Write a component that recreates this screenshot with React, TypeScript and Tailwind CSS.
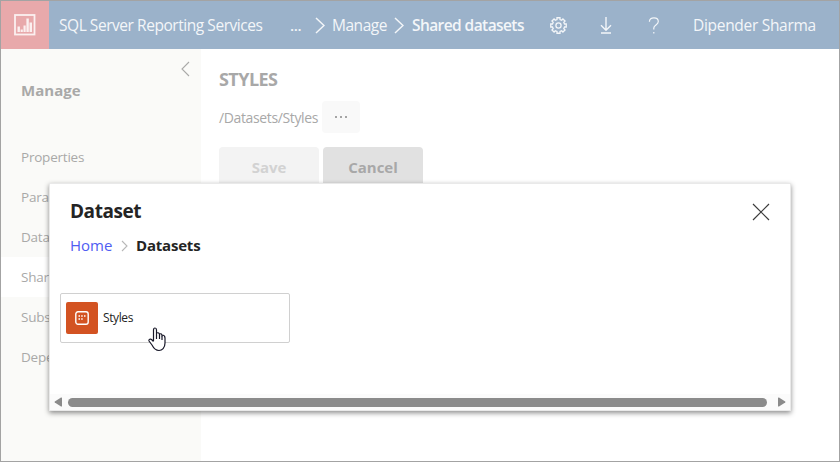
import React from 'react';

type TextProps = { children: React.ReactNode; className?: string };

const T = ({ children, className = '' }: TextProps) => (
  <span className={`block whitespace-nowrap ${className}`}>{children}</span>
);

const Chevron = ({ className = '', d = 'M1 1 L9 8.5 L1 16', w = 10, h = 17, sw = 1.5 }) => (
  <svg width={w} height={h} viewBox={`0 0 ${w} ${h}`} className={`shrink-0 ${className}`} fill="none" stroke="currentColor" strokeWidth={sw}>
    <path d={d} />
  </svg>
);

const gearPath = Array.from({ length: 8 }, (_, i) => {
  const pt = (r: number, deg: number) => {
    const a = (deg * Math.PI) / 180;
    return `${(8.5 + r * Math.cos(a)).toFixed(2)} ${(8.5 + r * Math.sin(a)).toFixed(2)}`;
  };
  const c = i * 45;
  return `${i ? 'L' : 'M'}${pt(6.2, c - 14)} L${pt(7.9, c - 11)} L${pt(7.9, c + 11)} L${pt(6.2, c + 14)}`;
}).join(' ') + 'Z';

function Header() {
  return (
    <header className="flex h-12 shrink-0 items-center bg-[#9bb2ca] text-[#f3f6f9]">
      <div className="flex h-12 w-12 shrink-0 items-center justify-center bg-[#e8a9ab]">
        <svg width="22" height="22" viewBox="0 0 22 22" className="text-[#fbf0f0]">
          <rect x="1" y="1" width="19.5" height="19.5" fill="none" stroke="currentColor" strokeWidth="1.8" />
          <path fill="currentColor" d="M3.5 12.5h2.4V18H3.5zM6.6 15.5h2.2V18H6.6zM9.5 11.5h2.2V18H9.5zM12.4 4.5h2.4V18h-2.4zM15.5 8.5h2.5V18h-2.5z" />
        </svg>
      </div>
      <T className="ml-[10px] w-[231px] pt-0.5 text-[15.5px] tracking-[-0.45px]">SQL Server Reporting Services</T>
      <T className="w-[25px] text-[15px] font-semibold tracking-[-0.4px]">...</T>
      <Chevron />
      <T className="ml-[7px] w-[62px] pt-0.5 text-[15.5px] tracking-[-0.47px]">Manage</T>
      <Chevron />
      <T className="ml-2 w-[138px] pt-0.5 text-[15.5px] font-semibold tracking-[-0.58px]">Shared datasets</T>
      <svg width="17" height="17" viewBox="0 0 17 17" fill="none" stroke="currentColor" strokeWidth="1.3" className="shrink-0">
        <path d={gearPath} />
        <circle cx="8.5" cy="8.5" r="2.6" />
      </svg>
      <svg width="12" height="17" viewBox="0 0 12 17" fill="none" stroke="currentColor" strokeWidth="1.4" className="ml-[33px] shrink-0">
        <path d="M6 0V13M1 8.2L6 13.2L11 8.2M1 16H11" />
      </svg>
      <svg width="12" height="17" viewBox="0 0 12 17" fill="none" stroke="currentColor" strokeWidth="1.2" className="ml-9 shrink-0">
        <path d="M1.4 4.8C1.4 2.2 3.4.8 5.9.8C8.5.8 10.3 2.3 10.3 4.5C10.3 7.8 5.8 8 5.8 11V12.5M5.8 15V16.5" />
      </svg>
      <T className="ml-[33px] pt-0.5 text-[15.5px] tracking-[-0.3px]">Dipender Sharma</T>
    </header>
  );
}

function Sidebar() {
  return (
    <aside className="w-[200px] shrink-0 bg-[#fafaf8] text-[#a9a9a8]">
      <div className="flex h-[88px] justify-between pl-5 pr-[11px]">
        <T className="pt-[31px] text-[15px] leading-5 font-bold tracking-[0.05px]">Manage</T>
        <Chevron className="mt-3" w={9} h={16} sw={1.1} d="M8 1 L1 8 L8 15" />
      </div>
      {['Properties', 'Para', 'Data', 'Shar', 'Subs', 'Depe'].map((n, i) => (
        <div key={n} className={`flex h-10 items-center pl-5 ${i === 3 ? 'bg-white' : ''}`}>
          <T className="text-[13.5px] tracking-[-0.22px]">{n}</T>
        </div>
      ))}
    </aside>
  );
}

function Dialog() {
  return (
    <section className="absolute top-[182px] left-[48px] flex h-[228px] w-[742px] flex-col border border-[#e9e9e9] bg-white text-[#242424] shadow-[0_2px_5px_rgba(0,0,0,0.45)]">
      <div className="flex h-[50px] justify-between pl-5 pr-5">
        <T className="pt-[15px] text-[19px] leading-6 font-bold tracking-[-0.45px]">Dataset</T>
        <svg width="18" height="18" viewBox="0 0 18 18" className="mt-[19px]" stroke="#3c3c3c" strokeWidth="1.2">
          <path d="M1 1L17 17M17 1L1 17" />
        </svg>
      </div>
      <nav className="flex h-[23px] items-center pl-5">
        <T className="w-[51px] text-[15px] text-[#4f5df2]">Home</T>
        <Chevron className="text-[#b8b8b8]" w={7} h={12} sw={1.1} d="M1 1 L6 6 L1 11" />
        <T className="ml-2 text-[15px] font-bold tracking-[-0.2px]">Datasets</T>
      </nav>
      <div className="mt-9 ml-[10px] flex h-[50px] w-[230px] items-center rounded-[2px] border border-[#d0d0d0] pl-[5px]">
        <div className="flex h-8 w-8 items-center justify-center rounded-[2px] bg-[#d35322]">
          <svg width="14" height="14" viewBox="0 0 14 14" fill="none" stroke="#fff" strokeWidth="1.4">
            <rect x=".8" y=".8" width="12.4" height="12.4" rx="2.2" />
            <path d="M3.5 5h1.5M6.2 5h1.5M9 5h1.5M3.5 8h1.5M6.2 8h1.5" />
          </svg>
        </div>
        <T className="ml-[5px] text-[12px] tracking-[-0.4px]">Styles</T>
      </div>
      <div className="mt-auto flex h-4 items-center bg-[#fbfbfb] pl-1 pr-1 text-[#8b8b8b]">
        <svg width="8" height="10" viewBox="0 0 8 10" fill="currentColor"><path d="M7 .5Q8 .2 8 1V9Q8 9.8 7 9.5L.8 5.5Q.2 5 .8 4.5Z" /></svg>
        <div className="mx-[6px] h-[9px] w-[699px] rounded-full bg-[#8b8b8b]" />
        <svg width="8" height="10" viewBox="0 0 8 10" fill="currentColor" className="ml-auto"><path d="M1 .5Q0 .2 0 1V9Q0 9.8 1 9.5L7.2 5.5Q7.8 5 7.2 4.5Z" /></svg>
      </div>
      <svg width="19" height="25" viewBox="0 0 19 25" className="absolute top-[143px] left-[98px]" fill="#fff" stroke="#171728" strokeWidth="1.2" strokeLinejoin="round">
        <path d="M5.5 14V3Q5.5 1 7 1T8.5 3V8V6Q11.5 5 11.5 8V7Q14 6 14 9V8Q17 8 17 11V16C17 21 14 23.5 11 23.5C7 23.5 5.5 21 4 18L1 14C.5 12.5 2.5 11.5 3.5 12.5L5.5 14.5" />
        <path d="M8.5 8V12M11.5 8V12M14 9V13" />
      </svg>
    </section>
  );
}

export default function App() {
  return (
    <div className="relative flex h-[462px] w-[840px] flex-col overflow-hidden border border-[#a3a3a3] bg-white font-['Open_Sans','Noto_Sans',sans-serif]">
      <Header />
      <div className="flex flex-1">
        <Sidebar />
        <main className="flex-1 pl-[18px] text-[#a8a8a8]">
          <T className="mt-[18px] text-[18px] leading-6 font-bold tracking-[-0.55px]">STYLES</T>
          <div className="mt-[10px] flex h-8 items-center">
            <T className="w-[103px] text-[14px] tracking-[-0.37px]">/Datasets/Styles</T>
            <div className="flex h-8 w-[38px] items-center justify-center gap-[3px] rounded bg-[#f9f9f9]">
              {[0, 1, 2].map((i) => <i key={i} className="h-[2px] w-[2px] bg-[#a5a5a5]" />)}
            </div>
          </div>
          <div className="mt-[14px] flex gap-1 text-[15px] font-bold">
            <div className="flex h-10 w-[100px] items-center justify-center rounded bg-[#f3f3f3] text-[#d2d2d2]">Save</div>
            <div className="flex h-10 w-[100px] items-center justify-center rounded bg-[#e1e1e1]">Cancel</div>
          </div>
        </main>
      </div>
      <Dialog />
    </div>
  );
}
